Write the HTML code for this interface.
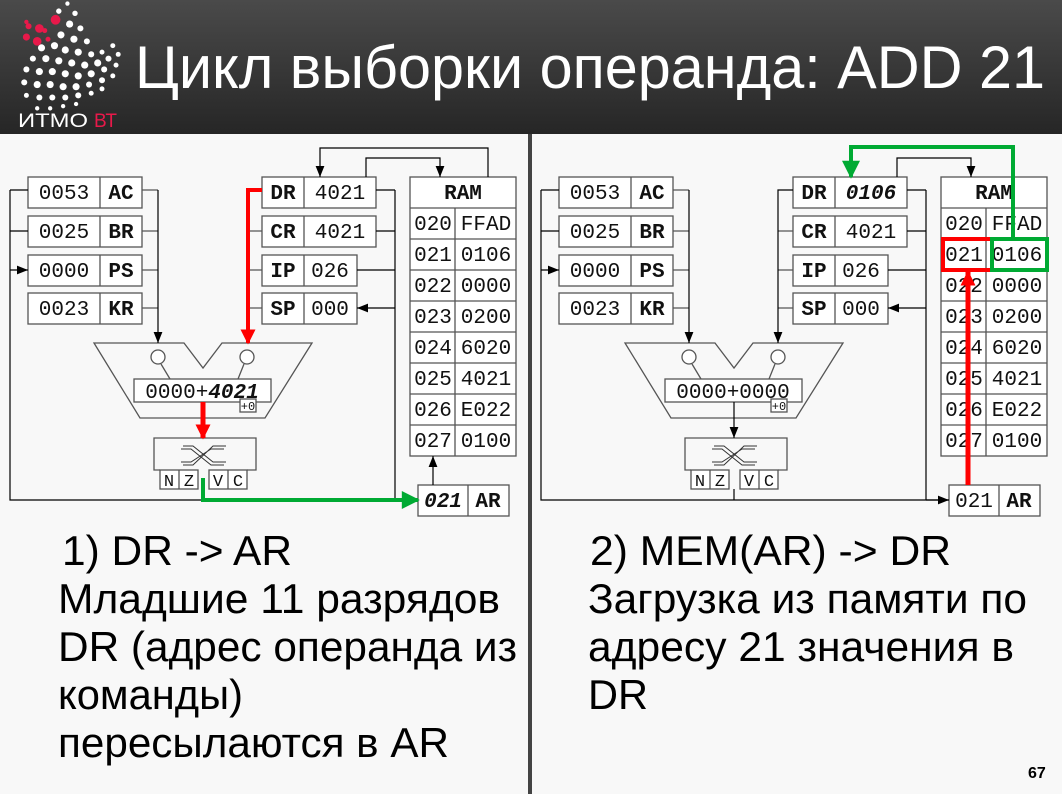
<!DOCTYPE html>
<html><head><meta charset="utf-8"><style>
html,body{margin:0;padding:0;width:1062px;height:794px;overflow:hidden;background:#f8f8f8}
svg{display:block}
.m{font-family:"Liberation Mono",monospace;font-size:21px;fill:#111;text-anchor:middle}
.b{font-weight:bold}
.t{font-family:"Liberation Sans","Noto Sans CJK SC",sans-serif;fill:#000;font-size:42px}
</style></head><body>
<svg width="1062" height="794" viewBox="0 0 1062 794" xmlns="http://www.w3.org/2000/svg">
<defs>
<linearGradient id="hg" x1="0" y1="0" x2="0" y2="1"><stop offset="0" stop-color="#4a4a4a"/><stop offset="1" stop-color="#262626"/></linearGradient>
<marker id="a" viewBox="0 0 10 10" refX="10" refY="5" markerWidth="12" markerHeight="11" markerUnits="userSpaceOnUse" orient="auto"><path d="M0,1 L10,5 L0,9 z" fill="#000"/></marker>
<marker id="ar" viewBox="0 0 10 10" refX="9" refY="5" markerWidth="18" markerHeight="15" markerUnits="userSpaceOnUse" orient="auto"><path d="M0,0 L10,5 L0,10 z" fill="#f00"/></marker>
<marker id="ag" viewBox="0 0 10 10" refX="9" refY="5" markerWidth="22" markerHeight="18" markerUnits="userSpaceOnUse" orient="auto"><path d="M0,0 L10,5 L0,10 z" fill="#0a3"/></marker>
</defs>
<rect x="0" y="0" width="1062" height="134" fill="url(#hg)"/>
<rect x="0" y="134" width="1062" height="660" fill="#f8f8f8"/>
<rect x="528" y="134" width="4" height="660" fill="#444"/>
<g fill="#fff" transform="translate(-6,-4) scale(1.08)">
<circle cx="68" cy="7" r="2"/><circle cx="60" cy="14" r="2.5"/><circle cx="75" cy="16" r="2.5"/>
<circle cx="70" cy="26" r="3.3"/><circle cx="80" cy="30" r="2.8"/><circle cx="62" cy="36" r="3.3"/><circle cx="74" cy="40" r="3.3"/><circle cx="86" cy="42" r="2.8"/>
<circle cx="44" cy="48" r="3.3"/><circle cx="56" cy="46" r="3.3"/><circle cx="66" cy="50" r="3.3"/><circle cx="78" cy="52" r="3.3"/><circle cx="90" cy="54" r="2.8"/><circle cx="100" cy="52" r="2.3"/><circle cx="110" cy="46" r="2.3"/>
<circle cx="36" cy="58" r="2.8"/><circle cx="48" cy="58" r="3.3"/><circle cx="60" cy="60" r="3.3"/><circle cx="72" cy="62" r="3.3"/><circle cx="84" cy="64" r="3.3"/><circle cx="96" cy="62" r="3.3"/><circle cx="106" cy="58" r="2.8"/><circle cx="115" cy="54" r="2.3"/>
<circle cx="30" cy="68" r="2.8"/><circle cx="42" cy="70" r="3.3"/><circle cx="54" cy="70" r="3.3"/><circle cx="66" cy="72" r="3.3"/><circle cx="78" cy="74" r="3.3"/><circle cx="90" cy="72" r="3.3"/><circle cx="102" cy="68" r="2.8"/><circle cx="113" cy="64" r="2.3"/>
<circle cx="28" cy="80" r="2.8"/><circle cx="40" cy="82" r="3.3"/><circle cx="52" cy="82" r="3.3"/><circle cx="64" cy="84" r="3.3"/><circle cx="76" cy="84" r="3.3"/><circle cx="88" cy="82" r="2.8"/><circle cx="100" cy="78" r="2.8"/><circle cx="110" cy="74" r="2.3"/>
<circle cx="30" cy="92" r="2.3"/><circle cx="42" cy="94" r="2.8"/><circle cx="54" cy="94" r="2.8"/><circle cx="66" cy="94" r="2.8"/><circle cx="78" cy="92" r="2.8"/><circle cx="90" cy="90" r="2.3"/><circle cx="100" cy="86" r="2.3"/>
<circle cx="40" cy="104" r="2"/><circle cx="52" cy="104" r="2"/><circle cx="64" cy="102" r="2"/><circle cx="76" cy="100" r="2"/>
<g fill="#e8194a"><circle cx="57" cy="22" r="4.5"/><circle cx="42" cy="30" r="4"/><circle cx="32" cy="28" r="2.8"/><circle cx="30" cy="38" r="3.3"/><circle cx="40" cy="42" r="4"/><circle cx="50" cy="40" r="2.3"/><circle cx="30" cy="24" r="2"/><circle cx="47" cy="32" r="2.3"/></g>
</g>
<text x="18" y="127" font-family="Liberation Sans,sans-serif" font-size="19" fill="#fff" textLength="70" lengthAdjust="spacingAndGlyphs">ИТМО</text>
<text x="94" y="127" font-family="Liberation Sans,sans-serif" font-size="19" fill="#e8194a">ВТ</text>
<text x="135" y="88" font-family="Liberation Sans,sans-serif" font-size="60" fill="#fff" textLength="910" lengthAdjust="spacingAndGlyphs">Цикл выборки операнда: ADD 21</text>

<g>
<g fill="#fff" stroke="#555" stroke-width="1.3">
<rect x="28" y="177" width="114" height="31"/><rect x="28" y="216" width="114" height="31"/><rect x="28" y="255" width="114" height="31"/><rect x="28" y="293" width="114" height="31"/>
<rect x="262" y="177" width="114" height="31"/><rect x="262" y="216" width="114" height="31"/><rect x="262" y="255" width="95" height="31"/><rect x="262" y="293" width="95" height="31"/>
<rect x="410" y="177" width="106" height="279"/>
<rect x="418" y="485" width="91" height="31"/>
<path d="M94,343 L184,343 L203,368 L222,343 L312,343 L265,418 L140,418 Z" fill="#f8f8f8"/>
<rect x="134" y="379" width="137" height="23"/>
<rect x="240" y="399" width="16" height="13"/>
<path d="M160,470 L154,470 L154,438 L256,438 L256,470 L247,470" fill="none"/>
<rect x="160" y="470" width="38" height="19"/><rect x="209" y="470" width="38" height="19"/>
</g>
<g stroke="#555" stroke-width="1.3" fill="none">
<path d="M100,177V208M100,216V247M100,255V286M100,293V324M304,177V208M304,216V247M304,255V286M304,293V324M455,208V456M468,485V516"/>
<path d="M410,208H516M410,239H516M410,270H516M410,301H516M410,332H516M410,363H516M410,394H516M410,425H516"/>
<path d="M179,470V489M228,470V489"/>
<circle cx="158" cy="357" r="7" fill="#fff"/><circle cx="247" cy="357" r="7" fill="#fff"/>
<path d="M161,364L170,379M244,364L238,379"/>
<path d="M142,190H158M142,231H158M142,270H158M142,308H158"/>
<path d="M262,231H250M262,270H250M262,308H250"/>
</g>
<g stroke="#000" stroke-width="1.2" fill="none">
<path d="M10,190V500H203"/>
<path d="M10,190H28M10,231H28M10,270H28" marker-end="url(#a)"/>
<path d="M158,190V343" marker-end="url(#a)"/>
<path d="M395,190V500H203"/>
<path d="M395,190H376M395,231H376M395,270H357M395,308H357" marker-end="url(#a)"/>
<path d="M366,177V158H440V177" marker-end="url(#a)"/>
<path d="M433,485V456" marker-end="url(#a)"/>
<path d="M488,177V148H320V177" marker-end="url(#a)"/>
</g>
<path d="M183,446H193L213,462H226M181,449H191L211,465H224M183,465H193L213,446H226M181,462H191L211,449H224" stroke="#333" stroke-width="1" fill="none"/>
<path d="M262,190H248V343" stroke="#f00" stroke-width="4" fill="none" marker-end="url(#ar)"/>
<path d="M203,402V438" stroke="#f00" stroke-width="5" fill="none" marker-end="url(#ar)"/>
<path d="M203,478V500H418" stroke="#0a3" stroke-width="4" fill="none" marker-end="url(#ag)"/>
<text class="m" x="64" y="199">0053</text><text class="m b" x="121" y="199">AC</text>
<text class="m" x="64" y="238">0025</text><text class="m b" x="121" y="238">BR</text>
<text class="m" x="64" y="277">0000</text><text class="m b" x="121" y="277">PS</text>
<text class="m" x="64" y="315">0023</text><text class="m b" x="121" y="315">KR</text>
<text class="m b" x="283" y="199">DR</text><text class="m" x="340" y="199">4021</text>
<text class="m b" x="283" y="238">CR</text><text class="m" x="340" y="238">4021</text>
<text class="m b" x="283" y="277">IP</text><text class="m" x="330" y="277">026</text>
<text class="m b" x="283" y="315">SP</text><text class="m" x="330" y="315">000</text>
<text class="m b" x="463" y="199">RAM</text>
<text class="m" x="433" y="230">020</text><text class="m" x="486" y="230">FFAD</text>
<text class="m" x="433" y="261">021</text><text class="m" x="486" y="261">0106</text>
<text class="m" x="433" y="292">022</text><text class="m" x="486" y="292">0000</text>
<text class="m" x="433" y="323">023</text><text class="m" x="486" y="323">0200</text>
<text class="m" x="433" y="354">024</text><text class="m" x="486" y="354">6020</text>
<text class="m" x="433" y="385">025</text><text class="m" x="486" y="385">4021</text>
<text class="m" x="433" y="416">026</text><text class="m" x="486" y="416">E022</text>
<text class="m" x="433" y="447">027</text><text class="m" x="486" y="447">0100</text>
<text class="m b" x="443" y="507" font-style="italic">021</text><text class="m b" x="488" y="507">AR</text>
<text class="m" x="202" y="398" style="font-size:21px">0000+<tspan font-weight="bold" font-style="italic">4021</tspan></text>
<text class="m" x="248" y="410" style="font-size:12px">+0</text>
<text class="m" x="169" y="486" style="font-size:17px">N</text><text class="m" x="189" y="486" style="font-size:17px">Z</text>
<text class="m" x="218" y="486" style="font-size:17px">V</text><text class="m" x="238" y="486" style="font-size:17px">C</text>
</g>

<g transform="translate(531,0)">
<g fill="#fff" stroke="#555" stroke-width="1.3">
<rect x="28" y="177" width="114" height="31"/><rect x="28" y="216" width="114" height="31"/><rect x="28" y="255" width="114" height="31"/><rect x="28" y="293" width="114" height="31"/>
<rect x="262" y="177" width="114" height="31"/><rect x="262" y="216" width="114" height="31"/><rect x="262" y="255" width="95" height="31"/><rect x="262" y="293" width="95" height="31"/>
<rect x="410" y="177" width="106" height="279"/>
<rect x="418" y="485" width="91" height="31"/>
<path d="M94,343 L184,343 L203,368 L222,343 L312,343 L265,418 L140,418 Z" fill="#f8f8f8"/>
<rect x="134" y="379" width="137" height="23"/>
<rect x="240" y="399" width="16" height="13"/>
<path d="M160,470 L154,470 L154,438 L256,438 L256,470 L247,470" fill="none"/>
<rect x="160" y="470" width="38" height="19"/><rect x="209" y="470" width="38" height="19"/>
</g>
<g stroke="#555" stroke-width="1.3" fill="none">
<path d="M100,177V208M100,216V247M100,255V286M100,293V324M304,177V208M304,216V247M304,255V286M304,293V324M455,208V456M468,485V516"/>
<path d="M410,208H516M410,239H516M410,270H516M410,301H516M410,332H516M410,363H516M410,394H516M410,425H516"/>
<path d="M179,470V489M228,470V489"/>
<circle cx="158" cy="357" r="7" fill="#fff"/><circle cx="247" cy="357" r="7" fill="#fff"/>
<path d="M161,364L170,379M244,364L238,379"/>
<path d="M142,190H158M142,231H158M142,270H158M142,308H158"/>
<path d="M262,231H247M262,270H247M262,308H247"/>
</g>
<g stroke="#000" stroke-width="1.2" fill="none">
<path d="M10,190V500H418"/>
<path d="M203,489V500"/>
<path d="M10,190H28M10,231H28M10,270H28" marker-end="url(#a)"/>
<path d="M158,190V343" marker-end="url(#a)"/>
<path d="M262,190H247V343" marker-end="url(#a)"/>
<path d="M203,402V438" marker-end="url(#a)"/>
<path d="M395,190V500"/>
<path d="M395,190H376M395,231H376M395,270H357M395,308H357" marker-end="url(#a)"/>
<path d="M366,177V158H440V177" marker-end="url(#a)"/>
<path d="M395,500H418" marker-end="url(#a)"/>
</g>
<path d="M183,446H193L213,462H226M181,449H191L211,465H224M183,465H193L213,446H226M181,462H191L211,449H224" stroke="#333" stroke-width="1" fill="none"/>
<text class="m" x="64" y="199">0053</text><text class="m b" x="121" y="199">AC</text>
<text class="m" x="64" y="238">0025</text><text class="m b" x="121" y="238">BR</text>
<text class="m" x="64" y="277">0000</text><text class="m b" x="121" y="277">PS</text>
<text class="m" x="64" y="315">0023</text><text class="m b" x="121" y="315">KR</text>
<text class="m b" x="283" y="199">DR</text><text class="m b" x="340" y="199" font-style="italic">0106</text>
<text class="m b" x="283" y="238">CR</text><text class="m" x="340" y="238">4021</text>
<text class="m b" x="283" y="277">IP</text><text class="m" x="330" y="277">026</text>
<text class="m b" x="283" y="315">SP</text><text class="m" x="330" y="315">000</text>
<text class="m b" x="463" y="199">RAM</text>
<text class="m" x="433" y="230">020</text><text class="m" x="486" y="230">FFAD</text>
<text class="m" x="433" y="261">021</text><text class="m" x="486" y="261">0106</text>
<text class="m" x="433" y="292">022</text><text class="m" x="486" y="292">0000</text>
<text class="m" x="433" y="323">023</text><text class="m" x="486" y="323">0200</text>
<text class="m" x="433" y="354">024</text><text class="m" x="486" y="354">6020</text>
<text class="m" x="433" y="385">025</text><text class="m" x="486" y="385">4021</text>
<text class="m" x="433" y="416">026</text><text class="m" x="486" y="416">E022</text>
<text class="m" x="433" y="447">027</text><text class="m" x="486" y="447">0100</text>
<text class="m" x="443" y="507">021</text><text class="m b" x="488" y="507">AR</text>
<text class="m" x="202" y="398" style="font-size:21px">0000+0000</text>
<text class="m" x="248" y="410" style="font-size:12px">+0</text>
<text class="m" x="169" y="486" style="font-size:17px">N</text><text class="m" x="189" y="486" style="font-size:17px">Z</text>
<text class="m" x="218" y="486" style="font-size:17px">V</text><text class="m" x="238" y="486" style="font-size:17px">C</text>
<rect x="412" y="239" width="49" height="31" fill="none" stroke="#f00" stroke-width="4"/>
<rect x="461" y="239" width="55" height="31" fill="none" stroke="#0a3" stroke-width="4"/>
<path d="M437,485V272" stroke="#f00" stroke-width="5" fill="none" marker-end="url(#ar)"/>
<path d="M482,239V147H320V177" stroke="#0a3" stroke-width="4" fill="none" marker-end="url(#ag)"/>
</g>

<text class="t" x="62" y="565" textLength="230" lengthAdjust="spacingAndGlyphs">1) DR -&gt; AR</text>
<text class="t" x="58" y="613" textLength="442" lengthAdjust="spacingAndGlyphs">Младшие 11 разрядов</text>
<text class="t" x="58" y="661" textLength="459" lengthAdjust="spacingAndGlyphs">DR (адрес операнда из</text>
<text class="t" x="58" y="709" textLength="185" lengthAdjust="spacingAndGlyphs">команды)</text>
<text class="t" x="58" y="757" textLength="391" lengthAdjust="spacingAndGlyphs">пересылаются в AR</text>
<text class="t" x="590" y="565" textLength="361" lengthAdjust="spacingAndGlyphs">2) MEM(AR) -&gt; DR</text>
<text class="t" x="588" y="613" textLength="439" lengthAdjust="spacingAndGlyphs">Загрузка из памяти по</text>
<text class="t" x="588" y="661" textLength="426" lengthAdjust="spacingAndGlyphs">адресу 21 значения в</text>
<text class="t" x="588" y="709" textLength="60" lengthAdjust="spacingAndGlyphs">DR</text>
<text x="1028" y="778" font-family="Liberation Sans,sans-serif" font-weight="bold" font-size="16" fill="#000">67</text>
</svg>
</body></html>
